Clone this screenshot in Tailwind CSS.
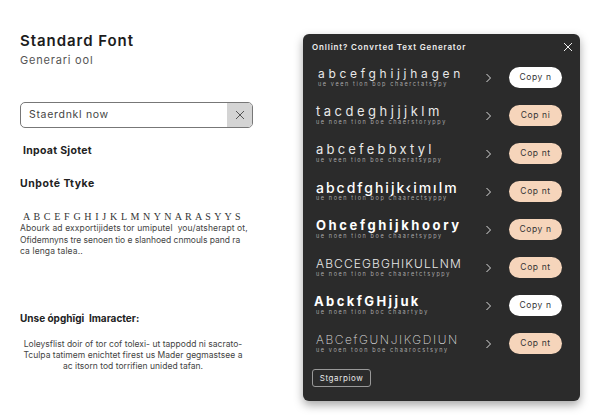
<!doctype html>
<html><head><meta charset="utf-8"><script src="https://cdn.jsdelivr.net/npm/@tailwindcss/browser@4"></script></head>
<body class="bg-white">
<div class="w-[600px] h-[420px] overflow-hidden flex font-['Inter',sans-serif] text-[#222]">
  <div class="w-[303px] shrink-0 pl-[20px] pt-[32px] flex flex-col items-start">
    <h1 class="text-[15px] leading-[18px] font-semibold tracking-[0.95px] text-[#1c1c1c]">Standard Font</h1>
    <p class="mt-[3px] text-[11px] leading-[14px] tracking-[0.8px] text-[#555]">Generari ool</p>
    <div class="mt-[35px] w-[233px] h-[26px] flex rounded-[5px] border border-[#777] overflow-hidden">
      <span class="flex-1 pl-[8px] text-[10.5px] leading-[24px] tracking-[0.7px] text-[#444]">Staerdnkl now</span>
      <span class="w-[25px] bg-[#d4d4d4] flex items-center justify-center"><svg width="10" height="10" viewBox="0 0 10 10" fill="none" stroke="#555" stroke-width="1"><path d="M1 1l8 8M9 1l-8 8"/></svg></span>
    </div>
    <p class="mt-[16px] ml-[3px] text-[10.5px] leading-[14px] font-bold tracking-[0.3px]">Inpoat Sjotet</p>
    <p class="mt-[19px] text-[10.5px] leading-[14px] font-bold tracking-[0.55px]">Unþoté Ttyke</p>
    <p class="mt-[19px] ml-[3px] font-['Liberation_Serif',serif] text-[10px] leading-[13px] tracking-[0.62px] text-[#333] whitespace-nowrap">A B C E F G H I J K L M N Y N A R A S Y Y S</p>
    <p class="text-[8.5px] leading-[11.5px] tracking-[0.12px] text-[#444] whitespace-nowrap">Abourk ad exxportijidets tor umiputel&nbsp; you/atsherapt ot,<br><span class="tracking-[-0.03px]">Ofidemnyns tre senoen tio e slanhoed cnmouls pand ra</span><br>ca lenga talea..</p>
    <p class="mt-[53px] text-[10px] leading-[14px] font-bold tracking-[0px]">Unse ópghĩgi&nbsp; Imaracter:</p>
    <p class="mt-[14px] w-[226px] text-center text-[8.5px] leading-[11px] tracking-[0.02px] text-[#444] whitespace-nowrap">Loleysflist doir of tor cof tolexi- ut tappodd ni sacrato-<br>Tculpa tatimem enichtet firest us Mader gegmastsee a<br>ac itsorn tod torrifien unided tafan.</p>
  </div>
  <div class="mt-[34px] w-[277px] h-[367px] rounded-[6px] bg-[#2b2b2b] shadow-[0_4px_10px_rgba(0,0,0,0.35)] pl-[9px] pr-[7px] pt-[6px] flex flex-col text-white">
    <div class="flex items-center justify-between h-[13px]">
      <span class="text-[8px] font-semibold tracking-[0.85px] text-[#eee]">Onllint? Convrted Text Generator</span>
      <svg width="10" height="10" viewBox="0 0 10 10" fill="none" stroke="#eee" stroke-width="1"><path d="M1 1l8 8M9 1l-8 8"/></svg>
    </div>
    <div class="flex flex-col gap-[17px] mt-[14px] pl-[4px]">
      <div class="h-[21px] flex items-center">
        <div class="w-[165px] pl-[2px] whitespace-nowrap"><div class="text-[12px] leading-[13px] tracking-[3.7px] text-[#e8e8e8]">abcefghijjhagen</div><div class="text-[5.5px] leading-[9px] tracking-[1.6px] text-[#aaa]">ue veen tion bop chaerctatsypy</div></div>
        <svg class="w-[5px] h-[10px] ml-[5px]" viewBox="0 0 5 10" fill="none" stroke="#ddd" stroke-width="1"><path d="M.5 1l4 4-4 4"/></svg>
        <span class="ml-[18px] w-[53px] h-[21px] rounded-full bg-white text-[#333] text-[8.5px] leading-[21px] text-center tracking-[0.6px]">Copy n</span>
      </div>
      <div class="h-[21px] flex items-center">
        <div class="w-[165px] whitespace-nowrap"><div class="text-[13px] leading-[13px] tracking-[3.5px] text-[#e8e8e8]">tacdeghjjjklm</div><div class="text-[5.5px] leading-[9px] tracking-[1.6px] text-[#aaa]">ue noen tion boe chaerstoryppy</div></div>
        <svg class="w-[5px] h-[10px] ml-[5px]" viewBox="0 0 5 10" fill="none" stroke="#ddd" stroke-width="1"><path d="M.5 1l4 4-4 4"/></svg>
        <span class="ml-[18px] w-[53px] h-[21px] rounded-full bg-[#f6d5bb] text-[#333] text-[8.5px] leading-[21px] text-center tracking-[0.6px]">Cop ni</span>
      </div>
      <div class="h-[21px] flex items-center">
        <div class="w-[165px] whitespace-nowrap"><div class="text-[13px] leading-[13px] tracking-[3.2px] text-[#e8e8e8]">abcefebbxtyl</div><div class="text-[5.5px] leading-[9px] tracking-[1.6px] text-[#aaa]">ue veen tion boe chaeratsyppy</div></div>
        <svg class="w-[5px] h-[10px] ml-[5px]" viewBox="0 0 5 10" fill="none" stroke="#ddd" stroke-width="1"><path d="M.5 1l4 4-4 4"/></svg>
        <span class="ml-[18px] w-[53px] h-[21px] rounded-full bg-[#f6d5bb] text-[#333] text-[8.5px] leading-[21px] text-center tracking-[0.6px]">Cop nt</span>
      </div>
      <div class="h-[21px] flex items-center">
        <div class="w-[165px] whitespace-nowrap"><div class="text-[14px] leading-[13px] font-medium tracking-[2px] text-white">abcdfghijk‹imılm</div><div class="text-[5.5px] leading-[9px] tracking-[1.6px] text-[#aaa]">ue noen tion bop chaarectsyppy</div></div>
        <svg class="w-[5px] h-[10px] ml-[5px]" viewBox="0 0 5 10" fill="none" stroke="#ddd" stroke-width="1"><path d="M.5 1l4 4-4 4"/></svg>
        <span class="ml-[18px] w-[53px] h-[21px] rounded-full bg-[#f6d5bb] text-[#333] text-[8.5px] leading-[21px] text-center tracking-[0.6px]">Cop nt</span>
      </div>
      <div class="h-[21px] flex items-center">
        <div class="w-[165px] whitespace-nowrap"><div class="text-[13px] leading-[13px] font-bold tracking-[2.6px] text-white">Ohcefghijkhoory</div><div class="text-[5.5px] leading-[9px] tracking-[1.6px] text-[#aaa]">ue noen tion boe chaaretsyppy</div></div>
        <svg class="w-[5px] h-[10px] ml-[5px]" viewBox="0 0 5 10" fill="none" stroke="#ddd" stroke-width="1"><path d="M.5 1l4 4-4 4"/></svg>
        <span class="ml-[18px] w-[53px] h-[21px] rounded-full bg-[#f6d5bb] text-[#333] text-[8.5px] leading-[21px] text-center tracking-[0.6px]">Copy n</span>
      </div>
      <div class="h-[21px] flex items-center">
        <div class="w-[165px] whitespace-nowrap"><div class="text-[12px] leading-[13px] font-light tracking-[1.1px] text-[#e8e8e8]">ABCCEGBGHIKULLNM</div><div class="text-[5.5px] leading-[9px] tracking-[1.6px] text-[#aaa]">ue noen tion boe chaaretctsyppy</div></div>
        <svg class="w-[5px] h-[10px] ml-[5px]" viewBox="0 0 5 10" fill="none" stroke="#ddd" stroke-width="1"><path d="M.5 1l4 4-4 4"/></svg>
        <span class="ml-[18px] w-[53px] h-[21px] rounded-full bg-[#f6d5bb] text-[#333] text-[8.5px] leading-[21px] text-center tracking-[0.6px]">Cop nt</span>
      </div>
      <div class="h-[21px] flex items-center">
        <div class="w-[165px] -ml-[2px] mr-[2px] whitespace-nowrap"><div class="text-[13px] leading-[13px] font-bold tracking-[2.4px] text-white">AbckfGHjjuk</div><div class="pl-[2px] text-[5.5px] leading-[9px] tracking-[1.6px] text-[#aaa]">ue noen tion boc chaartyby</div></div>
        <svg class="w-[5px] h-[10px] ml-[5px]" viewBox="0 0 5 10" fill="none" stroke="#ddd" stroke-width="1"><path d="M.5 1l4 4-4 4"/></svg>
        <span class="ml-[18px] w-[53px] h-[21px] rounded-full bg-white text-[#333] text-[8.5px] leading-[21px] text-center tracking-[0.6px]">Copy n</span>
      </div>
      <div class="h-[21px] flex items-center">
        <div class="w-[165px] whitespace-nowrap"><div class="text-[12px] leading-[13px] font-extralight tracking-[1.6px] text-[#ddd]">ABCefGUNJIKGDIUN</div><div class="text-[5.5px] leading-[9px] tracking-[1.6px] text-[#aaa]">ue voen toon boe chaarocstsyny</div></div>
        <svg class="w-[5px] h-[10px] ml-[5px]" viewBox="0 0 5 10" fill="none" stroke="#ddd" stroke-width="1"><path d="M.5 1l4 4-4 4"/></svg>
        <span class="ml-[18px] w-[53px] h-[21px] rounded-full bg-[#f6d5bb] text-[#333] text-[8.5px] leading-[21px] text-center tracking-[0.6px]">Cop nt</span>
      </div>
    </div>
    <span class="mt-[15px] w-[59px] h-[18px] rounded-[3px] border border-[#999] text-[8px] leading-[16px] text-center tracking-[0.6px] text-[#e8e8e8]">Stgarpiow</span>
  </div>
</div>
</body></html>
